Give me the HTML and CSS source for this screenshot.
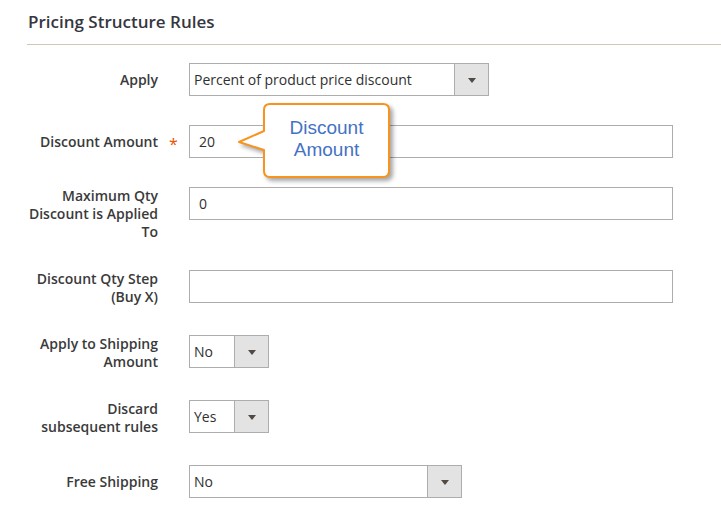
FILE: index.html
```html
<!DOCTYPE html>
<html>
<head>
<meta charset="utf-8">
<link rel="stylesheet" href="styles.css">
</head>
<body>
<div class="page">
  <div class="section-title">Pricing Structure Rules</div>
  <div class="form">
    <div class="field">
      <div class="label single">Apply</div>
      <div class="req"></div>
      <div class="select w-apply"><span class="val">Percent of product price discount</span><span class="btn"><span class="tri"></span></span></div>
    </div>
    <div class="field">
      <div class="label single">Discount Amount</div>
      <div class="req single">*</div>
      <div class="input">20</div>
    </div>
    <div class="field">
      <div class="label">Maximum Qty Discount is Applied To</div>
      <div class="req"></div>
      <div class="input">0</div>
    </div>
    <div class="field">
      <div class="label">Discount Qty Step (Buy X)</div>
      <div class="req"></div>
      <div class="input"></div>
    </div>
    <div class="field">
      <div class="label">Apply to Shipping Amount</div>
      <div class="req"></div>
      <div class="select w-small"><span class="val">No</span><span class="btn"><span class="tri"></span></span></div>
    </div>
    <div class="field">
      <div class="label">Discard subsequent rules</div>
      <div class="req"></div>
      <div class="select w-small"><span class="val">Yes</span><span class="btn"><span class="tri"></span></span></div>
    </div>
    <div class="field">
      <div class="label single">Free Shipping</div>
      <div class="req"></div>
      <div class="select w-free"><span class="val">No</span><span class="btn"><span class="tri"></span></span></div>
    </div>
  </div>
  <div class="callout">
    <svg class="callout-shape" width="170" height="90" viewBox="0 0 170 90">
      <path d="M 40 6 H 153 Q 159 6 159 12 V 73 Q 159 79 153 79 H 40 Q 34 79 34 73 V 52 L 9 44 L 34 33 V 12 Q 34 6 40 6 Z" fill="#ffffff" stroke="#f7931e" stroke-width="2" stroke-linejoin="round"/>
    </svg>
    <div class="callout-text">Discount<br>Amount</div>
  </div>
</div>
</body>
</html>
```

FILE: styles.css
```css
html, body {
  margin: 0;
  padding: 0;
  background: #ffffff;
}
.page {
  position: relative;
  width: 721px;
  height: 512px;
  overflow: hidden;
  font-family: "Open Sans", "Noto Sans", sans-serif;
  color: #303030;
}
.section-title {
  margin-left: 27px;
  padding: 12px 0 12px 1px;
  font-size: 17px;
  line-height: 20px;
  font-weight: 600;
  color: #363640;
  border-bottom: 1px solid #d1c7b7;
}
.form {
  padding-top: 18px;
}
.field {
  display: grid;
  grid-template-columns: 158px 31px auto;
  align-items: start;
  margin-bottom: 29px;
}
.label {
  padding-left: 28px;
  text-align: right;
  font-size: 14px;
  line-height: 18px;
  font-weight: 600;
  color: #3a3a3a;
}
.label.single {
  padding-top: 8px;
}
.req {
  text-align: center;
  color: #eb5202;
  font-size: 16px;
  line-height: 18px;
}
.req.single {
  padding-top: 10px;
}
.input {
  box-sizing: border-box;
  width: 484px;
  height: 33px;
  border: 1px solid #adadad;
  padding: 0 9px;
  font-size: 14px;
  line-height: 31px;
  color: #303030;
}
.select {
  box-sizing: border-box;
  display: flex;
  height: 33px;
  border: 1px solid #adadad;
  font-size: 14px;
  line-height: 31px;
  color: #303030;
}
.select .val {
  flex: 1;
  padding-left: 4px;
  white-space: nowrap;
  overflow: hidden;
}
.select .btn {
  width: 33px;
  background: #e3e3e3;
  border-left: 1px solid #adadad;
  display: flex;
  align-items: center;
  justify-content: center;
}
.tri {
  width: 0;
  height: 0;
  border-left: 4px solid transparent;
  border-right: 4px solid transparent;
  border-top: 5px solid #514943;
  margin-top: 1px;
}
.w-apply { width: 300px; }
.w-small { width: 80px; }
.w-free { width: 273px; }
.callout {
  position: absolute;
  left: 230px;
  top: 98px;
  width: 170px;
  height: 90px;
}
.callout-shape {
  display: block;
  filter: drop-shadow(3px 3px 2px rgba(0, 0, 0, 0.35));
}
.callout-text {
  position: absolute;
  left: 34px;
  top: 4px;
  width: 125px;
  height: 73px;
  display: flex;
  align-items: center;
  justify-content: center;
  text-align: center;
  font-family: "Liberation Sans", Arial, sans-serif;
  font-size: 19px;
  line-height: 22px;
  color: #4472c4;
}
```
